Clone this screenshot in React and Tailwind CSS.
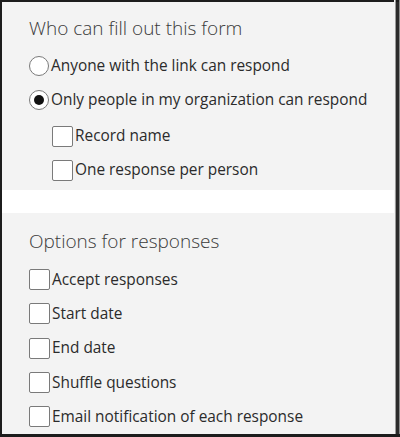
import React from "react";

const font = { fontFamily: '"Open Sans", "Noto Sans", sans-serif' };

function Radio({ checked, label }) {
  return (
    <div className="flex h-[34px] items-center">
      <span className="flex h-[20px] w-[20px] shrink-0 items-center justify-center rounded-full border-[1.5px] border-[#7a7a7a] bg-white">
        {checked && <span className="h-[10px] w-[10px] rounded-full bg-[#111]" />}
      </span>
      <span className="ml-[2px] whitespace-nowrap text-[15.4px] text-[#2b2b2b]">{label}</span>
    </div>
  );
}

function Check({ label, h }) {
  return (
    <div className={`flex items-center ${h}`}>
      <span className="h-[21px] w-[21px] shrink-0 rounded-[2px] border-[1.5px] border-[#7a7a7a] bg-white" />
      <span className="ml-[2px] whitespace-nowrap text-[15.4px] text-[#2b2b2b]">{label}</span>
    </div>
  );
}

export default function App() {
  return (
    <div className="flex h-[437px] w-[400px] flex-col overflow-hidden" style={font}>
      <div className="flex min-h-0 flex-1">
        <div className="flex min-w-0 flex-1 flex-col border-l-2 border-t-2 border-[#1c1c1c]">
          <div className="flex flex-col bg-[#f3f3f3] pb-[3px] pl-[27px] pt-[12px]">
            <h2 className="mb-[7px] h-[28px] text-[19px] font-light leading-[28px] text-[#3a3a3a]">
              Who can fill out this form
            </h2>
            <Radio label="Anyone with the link can respond" />
            <Radio checked label="Only people in my organization can respond" />
            <div className="mt-[2px] pl-[23px]">
              <Check h="h-[34px]" label="Record name" />
              <Check h="h-[34px]" label="One response per person" />
            </div>
          </div>
          <div className="h-[23px] bg-white" />
          <div className="flex flex-1 flex-col overflow-hidden bg-[#f3f3f3] pl-[27px] pt-[14px]">
            <h2 className="mb-[7px] h-[28px] text-[19px] font-light leading-[28px] text-[#3a3a3a]">
              Options for responses
            </h2>
            <Check h="h-[34.5px]" label="Accept responses" />
            <Check h="h-[34.5px]" label="Start date" />
            <Check h="h-[34.5px]" label="End date" />
            <Check h="h-[34.5px]" label="Shuffle questions" />
            <Check h="h-[34.5px]" label="Email notification of each response" />
          </div>
        </div>
        <div className="w-[1px] bg-[#f3f3f3]" />
        <div className="w-[1px] bg-[#9a9a9a]" />
        <div className="w-[3px] border-t-2 border-[#1c1c1c] bg-[#2a2a2a]" />
        <div className="w-[1px] bg-[#8a8a8a]" />
      </div>
      <div className="h-[3px] shrink-0 bg-[#1c1c1c]" />
    </div>
  );
}
